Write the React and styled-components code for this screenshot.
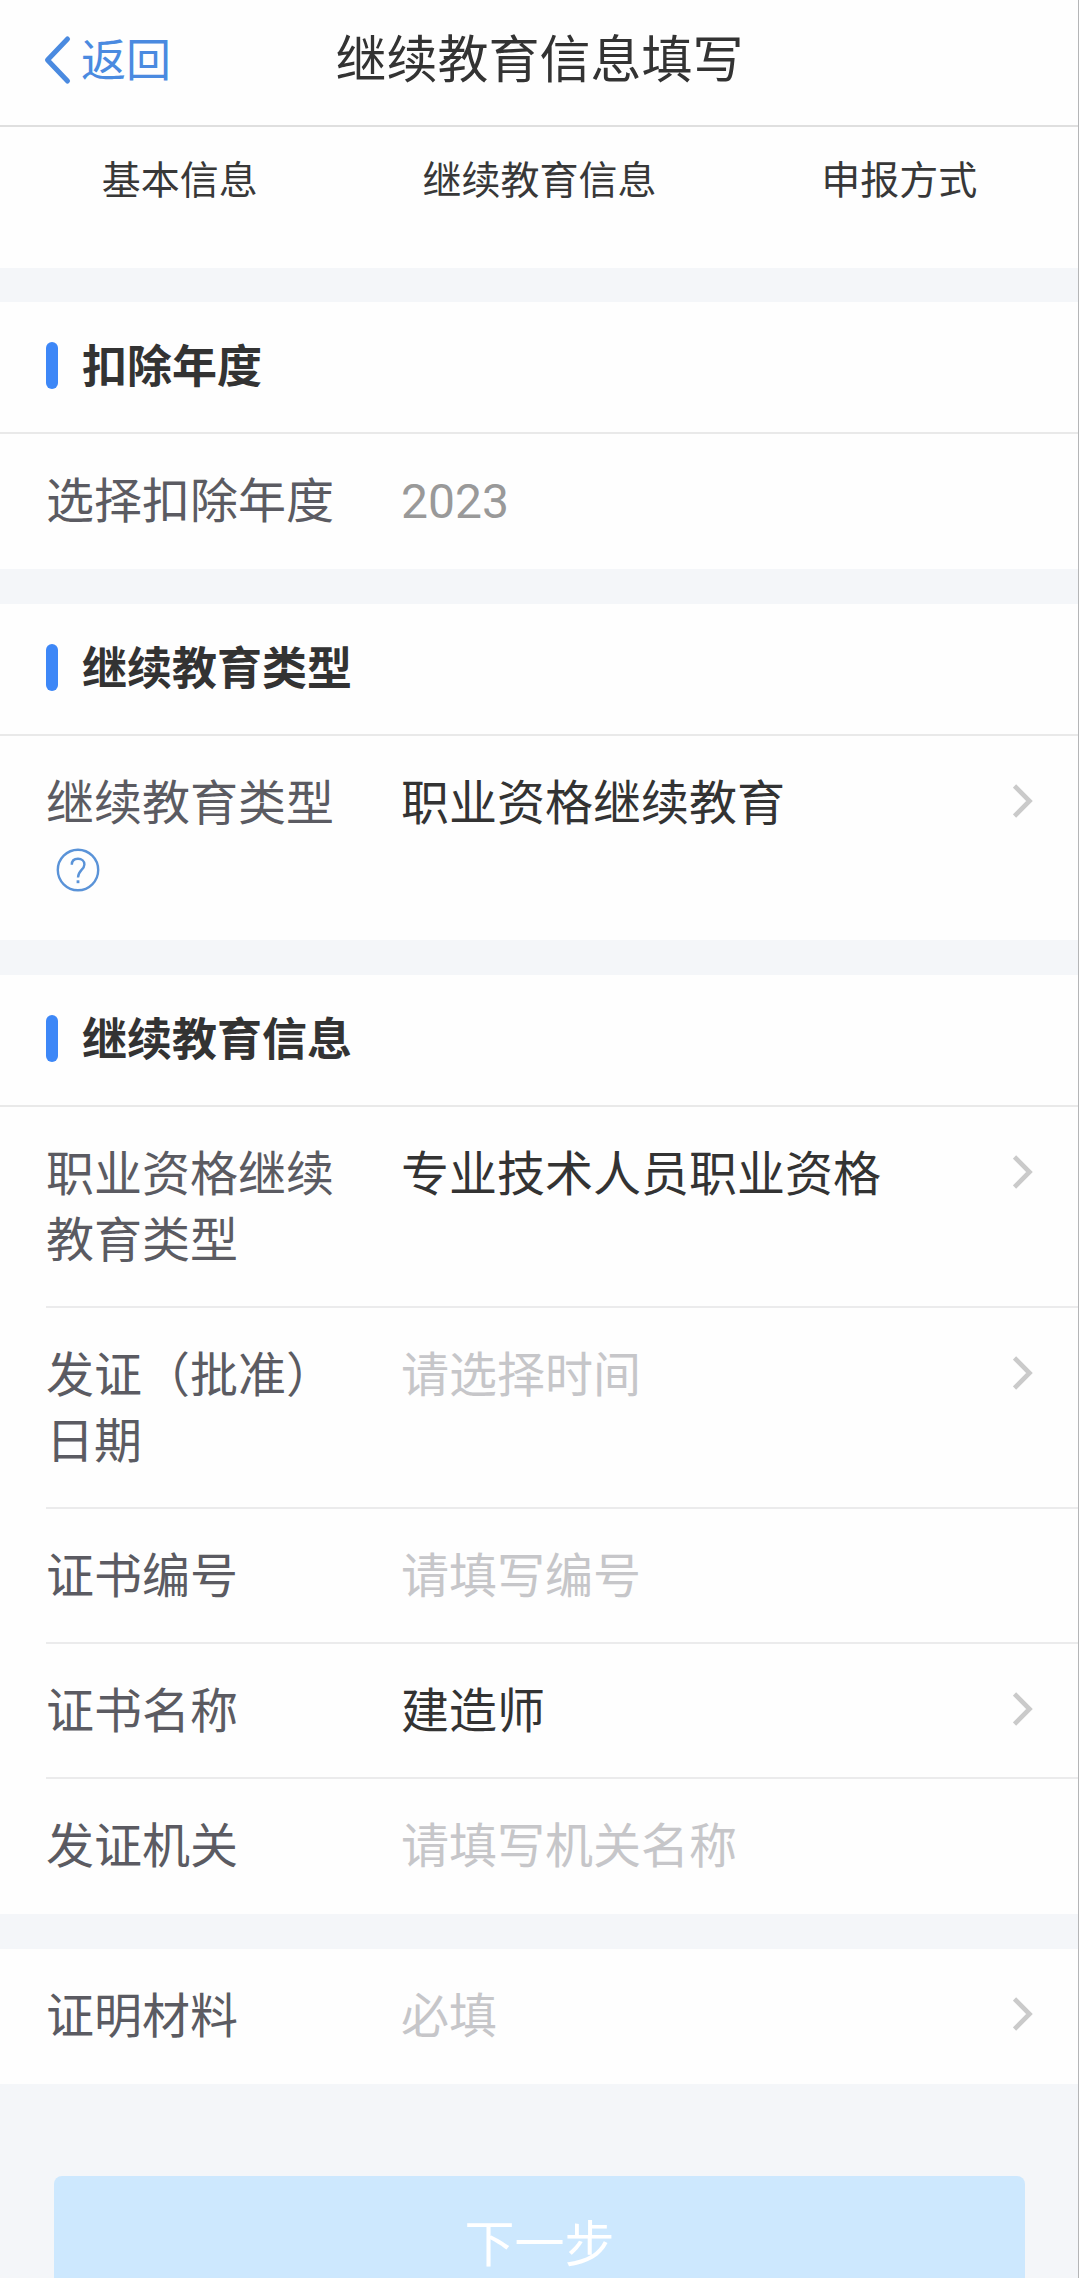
import styled, { createGlobalStyle } from "styled-components";

const GlobalStyle = createGlobalStyle`
  * {
    box-sizing: border-box;
  }

  body {
    margin: 0;
    background-color: #f4f6f9;
    font-family: Roboto, "Noto Sans CJK SC", sans-serif;
    text-spacing-trim: space-all;
  }
`;

const Page = styled.div`
  width: 1079px;
  height: 2278px;
  overflow: hidden;
  border-right: 1px solid #b4b5b7;
  background-color: #f4f6f9;
`;

const Header = styled.header`
  display: grid;
  grid-template-columns: 1fr auto 1fr;
  align-items: center;
  height: 127px;
  padding: 0 43px 5px 44px;
  border-bottom: 2px solid #dfdfdf;
  background-color: #fefefe;

  h1 {
    margin: 0;
    font-size: 51px;
    font-weight: 400;
    line-height: 1;
    color: #333;
  }
`;

const BackButton = styled.button`
  display: flex;
  align-items: center;
  gap: 9px;
  padding: 2px 0 0;
  border: 0;
  background: none;
  font-family: inherit;
  font-size: 45px;
  line-height: 1;
  color: #4a8ae0;

  svg {
    margin-top: -2px;
  }
`;

const Steps = styled.nav`
  display: grid;
  grid-template-columns: repeat(3, 1fr);
  height: 141px;
  margin-right: -1px;
  padding-top: 34px;
  background-color: #fefefe;
  font-size: 39px;
  line-height: 40px;
  text-align: center;
  color: #383838;
`;

const Section = styled.section`
  margin-top: ${(props) => props.$gap || 35}px;
  background-color: #fefefe;
`;

const SectionTitle = styled.h2`
  display: flex;
  align-items: center;
  gap: 24px;
  height: 132px;
  margin: 0;
  padding: 1px 46px 0;
  border-bottom: 2px solid #e9e9e9;
  font-size: 45px;
  font-weight: 700;
  line-height: 1;
  color: #333;

  &::before {
    content: "";
    width: 12px;
    height: 47px;
    margin-bottom: 4px;
    border-radius: 6px;
    background-color: #3d87f7;
  }
`;

const Row = styled.div`
  display: flex;
  align-items: flex-start;
  min-height: ${(props) => props.$height || 135}px;
  margin-left: 46px;
  padding: 35px 45px 0 0;
  font-size: 48px;
  line-height: 66px;

  &:not(:last-child) {
    border-bottom: 2px solid #ebebec;
  }
`;

const Label = styled.div`
  width: 300px;
  margin-right: 55px;
  color: #5b5b62;
`;

const valueColors = {
  normal: "#333",
  readonly: "#999",
  placeholder: "#c6c6c9",
};

const Value = styled.div`
  flex: 1;
  color: ${(props) => valueColors[props.$tone]};
`;

const ArrowIcon = styled.svg`
  width: 20px;
  height: 34px;
  margin-top: 13px;
`;

const HelpIcon = styled.svg`
  display: block;
  width: 44px;
  height: 44px;
  margin: 11px 0 0 10px;
`;

const Footer = styled.footer`
  padding: 92px 53px 0 54px;
`;

const NextButton = styled.button`
  display: block;
  width: 100%;
  height: 136px;
  padding: 0 0 9px;
  border: 0;
  border-radius: 8px;
  background-color: #cde8fe;
  font-family: inherit;
  font-size: 50px;
  color: #fff;
`;

const Arrow = () => (
  <ArrowIcon viewBox="0 0 20 34" fill="none">
    <path d="M1.5 2 L16.5 17 L1.5 32" stroke="#cacaca" strokeWidth="4.6" />
  </ArrowIcon>
);

const Help = () => (
  <HelpIcon viewBox="0 0 44 44" fill="none" stroke="#5a93d8" strokeWidth="2.4">
    <circle cx="22" cy="22" r="20.2" />
    <path d="M15.8 16.8 C15.8 12.8 18.4 10.8 22 10.8 C25.8 10.8 28.4 13 28.4 16.4 C28.4 21.6 22 22.5 22 29.5" />
    <path d="M22 32.3 V35.2" strokeWidth="2.8" />
  </HelpIcon>
);

const Field = ({ label, value, tone = "normal", arrow, help, height }) => (
  <Row $height={height}>
    <Label>
      {label}
      {help && <Help />}
    </Label>
    <Value $tone={tone}>{value}</Value>
    {arrow && <Arrow />}
  </Row>
);

const App = () => {
  return (
    <>
      <GlobalStyle />
      <Page>
        <Header>
          <BackButton>
            <svg width="28" height="50" viewBox="0 0 28 50" fill="none">
              <path
                d="M23.5 4 L3.5 25 L23.5 46"
                stroke="#4a8ae0"
                strokeWidth="5"
                strokeLinecap="round"
                strokeLinejoin="round"
              />
            </svg>
            返回
          </BackButton>
          <h1>继续教育信息填写</h1>
        </Header>

        <Steps>
          <span>基本信息</span>
          <span>继续教育信息</span>
          <span>申报方式</span>
        </Steps>

        <Section $gap={34}>
          <SectionTitle>扣除年度</SectionTitle>
          <Field label="选择扣除年度" value="2023" tone="readonly" />
        </Section>

        <Section>
          <SectionTitle>继续教育类型</SectionTitle>
          <Field
            label="继续教育类型"
            value="职业资格继续教育"
            height={204}
            arrow
            help
          />
        </Section>

        <Section>
          <SectionTitle>继续教育信息</SectionTitle>
          <Field
            label="职业资格继续教育类型"
            value="专业技术人员职业资格"
            height={201}
            arrow
          />
          <Field
            label="发证（批准）日期"
            value="请选择时间"
            tone="placeholder"
            height={201}
            arrow
          />
          <Field label="证书编号" value="请填写编号" tone="placeholder" />
          <Field label="证书名称" value="建造师" arrow />
          <Field label="发证机关" value="请填写机关名称" tone="placeholder" />
        </Section>

        <Section>
          <Field label="证明材料" value="必填" tone="placeholder" arrow />
        </Section>

        <Footer>
          <NextButton>下一步</NextButton>
        </Footer>
      </Page>
    </>
  );
};

export default App;
